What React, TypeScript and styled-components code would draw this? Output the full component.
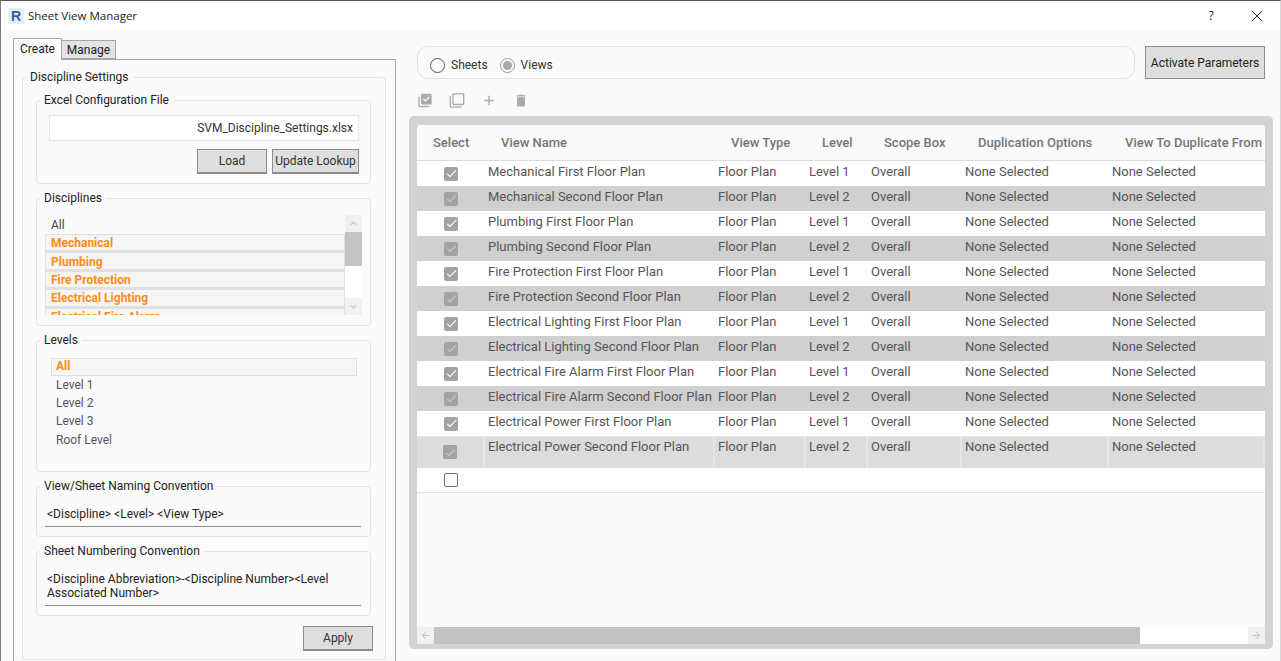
import * as React from 'react';
import styled, { createGlobalStyle } from 'styled-components';
import { X } from 'lucide-react';
import { MdLibraryAddCheck, MdOutlineFilterNone, MdAdd, MdDelete, MdCheck, MdKeyboardArrowUp, MdKeyboardArrowDown, MdArrowBack, MdArrowForward } from 'react-icons/md';

const disciplines = ['Mechanical', 'Plumbing', 'Fire Protection', 'Electrical Lighting', 'Electrical Fire Alarm'];
const levels = ['All', 'Level 1', 'Level 2', 'Level 3', 'Roof Level'];

const viewNames = [
	'Mechanical First Floor Plan',
	'Mechanical Second Floor Plan',
	'Plumbing First Floor Plan',
	'Plumbing Second Floor Plan',
	'Fire Protection First Floor Plan',
	'Fire Protection Second Floor Plan',
	'Electrical Lighting First Floor Plan',
	'Electrical Lighting Second Floor Plan',
	'Electrical Fire Alarm First Floor Plan',
	'Electrical Fire Alarm Second Floor Plan',
	'Electrical Power First Floor Plan',
];

const headers = ['Select', 'View Name', 'View Type', 'Level', 'Scope Box', 'Duplication Options', 'View To Duplicate From'];

const Cells: React.FC<{ name: string; level: string }> = ({ name, level }) => (
	<>
		<Cell>{name}</Cell>
		<Cell>Floor Plan</Cell>
		<Cell>{level}</Cell>
		<Cell>Overall</Cell>
		<Cell>None Selected</Cell>
		<Cell>None Selected</Cell>
	</>
);

const App: React.FC = () => {
	return (
		<Window>
			<GlobalStyle />
			<TitleBar>
				<AppIcon>R</AppIcon>
				<WindowTitle>Sheet View Manager</WindowTitle>
				<HelpButton>?</HelpButton>
				<CloseButton><X size={20} strokeWidth={1.2} /></CloseButton>
			</TitleBar>
			<Body>
				<LeftPane>
					<TabStrip>
						<Tab $active>Create</Tab>
						<Tab>Manage</Tab>
					</TabStrip>
					<TabPanel>
						<OuterGroup>
							<OuterLegend>Discipline Settings</OuterLegend>
							<Group $height={91}>
								<Legend>Excel Configuration File</Legend>
								<FileBox>SVM_Discipline_Settings.xlsx</FileBox>
								<FileButtons>
									<GrayButton $width={70}>Load</GrayButton>
									<GrayButton $width={87}>Update Lookup</GrayButton>
								</FileButtons>
							</Group>
							<Group $height={135}>
								<Legend>Disciplines</Legend>
								<ListFrame>
									<ListClip>
										<PlainItem>All</PlainItem>
										{disciplines.map((d) => <PickedItem key={d}>{d}</PickedItem>)}
									</ListClip>
									<VScroll>
										<ScrollArrow><MdKeyboardArrowUp size={13} /></ScrollArrow>
										<VThumb />
										<VTrack />
										<ScrollArrow><MdKeyboardArrowDown size={13} /></ScrollArrow>
									</VScroll>
								</ListFrame>
							</Group>
							<Group $height={139}>
								<Legend>Levels</Legend>
								<LevelList>
									{levels.map((l, i) => i === 0
										? <PickedLevel key={l}>{l}</PickedLevel>
										: <LevelItem key={l}>{l}</LevelItem>)}
								</LevelList>
							</Group>
							<Group $height={58}>
								<Legend>View/Sheet Naming Convention</Legend>
								<ConventionText>&lt;Discipline&gt; &lt;Level&gt; &lt;View Type&gt;</ConventionText>
							</Group>
							<Group $height={72}>
								<Legend>Sheet Numbering Convention</Legend>
								<ConventionText>&lt;Discipline Abbreviation&gt;-&lt;Discipline Number&gt;&lt;Level Associated Number&gt;</ConventionText>
							</Group>
							<ApplyRow>
								<GrayButton $width={70}>Apply</GrayButton>
							</ApplyRow>
						</OuterGroup>
					</TabPanel>
				</LeftPane>
				<RightPane>
					<TopRow>
						<RadioBar>
							<RadioOption>
								<Radio />
								<span>Sheets</span>
							</RadioOption>
							<RadioOption>
								<Radio $checked />
								<span>Views</span>
							</RadioOption>
						</RadioBar>
						<ActivateButton>Activate Parameters</ActivateButton>
					</TopRow>
					<Toolbar>
						<ToolIcon><MdLibraryAddCheck size={17} /></ToolIcon>
						<ToolIcon><MdOutlineFilterNone size={17} /></ToolIcon>
						<ToolIcon><MdAdd size={17} /></ToolIcon>
						<ToolIcon><MdDelete size={17} /></ToolIcon>
					</Toolbar>
					<GridFrame>
						<GridInner>
							<HeaderRow>
								{headers.map((h) => <HeaderCell key={h}>{h}</HeaderCell>)}
							</HeaderRow>
							{viewNames.map((name, i) => (
								<Row key={name} $alt={i % 2 === 1}>
									<CheckCell><CheckBox $dim={i % 2 === 1}><MdCheck size={13} /></CheckBox></CheckCell>
									<Cells name={name} level={i % 2 === 1 ? 'Level 2' : 'Level 1'} />
								</Row>
							))}
							<SelectedRow>
								<SelectedCell $center><CheckBox $dim><MdCheck size={13} /></CheckBox></SelectedCell>
								<SelectedCell>Electrical Power Second Floor Plan</SelectedCell>
								<SelectedCell>Floor Plan</SelectedCell>
								<SelectedCell>Level 2</SelectedCell>
								<SelectedCell>Overall</SelectedCell>
								<SelectedCell>None Selected</SelectedCell>
								<SelectedCell>None Selected</SelectedCell>
							</SelectedRow>
							<NewRow>
								<CheckCell><EmptyCheck /></CheckCell>
							</NewRow>
							<GridSpacer />
							<HScroll>
								<HArrow><MdArrowBack size={11} /></HArrow>
								<HThumb />
								<HTrack />
								<HArrow><MdArrowForward size={11} /></HArrow>
							</HScroll>
						</GridInner>
					</GridFrame>
				</RightPane>
			</Body>
		</Window>
	);
};

export default App;

const GlobalStyle = createGlobalStyle`
	html, body {
		margin: 0;
		padding: 0;
		height: 100%;
		overflow: hidden;
		background: #fafafa;
	}
	* {
		box-sizing: border-box;
	}
`;

const Window = styled.div`
	width: 1281px;
	height: 661px;
	display: flex;
	flex-direction: column;
	overflow: hidden;
	background: #fafafa;
	border-top: 1px solid #555;
	border-left: 1px solid #7a7a7a;
	border-right: 1px solid #d8d8d8;
	font-family: Roboto, "Liberation Sans", sans-serif;
	font-size: 12px;
	color: #333;
`;

const TitleBar = styled.div`
	height: 29px;
	flex: none;
	display: flex;
	align-items: center;
	padding-left: 7px;
	background: #fff;
`;

const AppIcon = styled.span`
	width: 16px;
	height: 16px;
	display: flex;
	align-items: center;
	justify-content: center;
	background: #e6eff7;
	color: #2f5f9c;
	font-family: "Liberation Sans", sans-serif;
	font-size: 14px;
	font-weight: 700;
`;

const WindowTitle = styled.span`
	margin-left: 4px;
	flex: 1;
	font-family: "Open Sans", "Liberation Sans", sans-serif;
	font-size: 11.5px;
	color: #222;
`;

const HelpButton = styled.span`
	width: 24px;
	text-align: center;
	font-family: "Open Sans", sans-serif;
	font-size: 12px;
	color: #222;
`;

const CloseButton = styled.span`
	width: 20px;
	margin: 0 13px 0 24px;
	display: flex;
	color: #222;
`;

const Body = styled.div`
	flex: 1;
	display: flex;
	min-height: 0;
`;

const LeftPane = styled.div`
	width: 395px;
	flex: none;
	padding: 8px 0 0 12px;
	display: flex;
	flex-direction: column;
`;

const TabStrip = styled.div`
	display: flex;
	align-items: flex-end;
	height: 22px;
	flex: none;
	position: relative;
	z-index: 1;
	margin-bottom: -1px;
`;

const Tab = styled.div<{ $active?: boolean }>`
	height: ${(p) => (p.$active ? '22px' : '19px')};
	width: ${(p) => (p.$active ? '49px' : '54px')};
	margin-bottom: ${(p) => (p.$active ? '0' : '1px')};
	display: flex;
	align-items: center;
	justify-content: center;
	border: 1px solid #a6a6a6;
	border-bottom: ${(p) => (p.$active ? '1px solid #fafafa' : '1px solid #a6a6a6')};
	border-left: ${(p) => (p.$active ? '1px solid #a6a6a6' : 'none')};
	background: ${(p) => (p.$active ? '#fafafa' : '#e3e3e3')};
	font-size: 12px;
	color: #222;
`;

const TabPanel = styled.div`
	flex: 1;
	border: 1px solid #a6a6a6;
	border-bottom: none;
	padding: 10px 9px 0 8px;
	min-height: 0;
`;

const OuterGroup = styled.fieldset`
	margin: 0;
	padding: 8px 14px 0 13px;
	border: 1px solid #dfe5ea;
	border-radius: 4px;
	height: 590px;
	min-width: 0;
	display: flex;
	flex-direction: column;
	gap: 0;
`;

const Legend = styled.legend`
	margin-left: -5px;
	padding: 0 4px;
	font-size: 12px;
	line-height: 15px;
	color: #222;
`;

const OuterLegend = styled(Legend)`
	margin-left: -10px;
`;

const Group = styled.fieldset<{ $height: number }>`
	margin: 0 0 7px;
	padding: 0 8px 0 8px;
	height: ${(p) => p.$height}px;
	flex: none;
	min-width: 0;
	border: 1px solid #dfe5ea;
	border-radius: 4px;
`;

const FileBox = styled.div`
	margin: 7px 3px 0 4px;
	height: 26px;
	display: flex;
	align-items: center;
	justify-content: flex-end;
	padding-right: 5px;
	background: #fff;
	border: 1px solid #e6e6e6;
	color: #333;
`;

const FileButtons = styled.div`
	margin: 8px 3px 0 0;
	display: flex;
	justify-content: flex-end;
	gap: 5px;
`;

const GrayButton = styled.div<{ $width: number }>`
	width: ${(p) => p.$width}px;
	height: 25px;
	display: flex;
	align-items: center;
	justify-content: center;
	background: #dedede;
	border: 1px solid #8c8c8c;
	border-bottom-width: 2px;
	font-size: 12px;
	color: #333;
	white-space: nowrap;
`;

const ListFrame = styled.div`
	display: flex;
	height: 100px;
	margin-top: 9px;
`;

const ListClip = styled.div`
	flex: 1;
	overflow: hidden;
	min-width: 0;
`;

const PlainItem = styled.div`
	height: 18px;
	margin-top: 1px;
	padding-left: 6px;
	padding-top: 1px;
	padding-bottom: 1px;
	display: flex;
	align-items: center;
	color: #444;
`;

const PickedItem = styled.div`
	height: 18.4px;
	padding-left: 5px;
	padding-top: 1px;
	display: flex;
	align-items: center;
	background: #f5f5f5;
	border: 1px solid #e0e0e0;
	border-bottom-width: 2px;
	color: #ff8c1a;
	font-weight: 700;
`;

const VScroll = styled.div`
	width: 17px;
	flex: none;
	display: flex;
	flex-direction: column;
`;

const ScrollArrow = styled.div`
	height: 17px;
	flex: none;
	display: flex;
	align-items: center;
	justify-content: center;
	background: #f0f0f0;
	color: #c4c4c4;
`;

const VThumb = styled.div`
	height: 34px;
	flex: none;
	background: #c4c4c4;
`;

const VTrack = styled.div`
	flex: 1;
	background: #fff;
`;

const LevelList = styled.div`
	margin: 10px 5px 0 6px;
`;

const LevelItem = styled.div`
	height: 18.4px;
	padding-left: 5px;
	padding-bottom: 2px;
	display: flex;
	align-items: center;
	color: #555;
`;

const PickedLevel = styled(LevelItem)`
	padding-left: 4px;
	background: #f5f5f5;
	border: 1px solid #e0e0e0;
	color: #ff8c1a;
	font-weight: 700;
`;

const ConventionText = styled.div`
	padding: 13px 2px 5px 2px;
	width: 316px;
	border-bottom: 1px solid #8f8f8f;
	line-height: 14px;
	color: #222;
`;

const ApplyRow = styled.div`
	display: flex;
	justify-content: flex-end;
	margin: 3px -2px 0 0;
`;

const RightPane = styled.div`
	flex: 1;
	min-width: 0;
	padding: 16px 7px 0 13px;
	display: flex;
	flex-direction: column;
`;

const TopRow = styled.div`
	display: flex;
	gap: 10px;
	padding: 0 8px;
	height: 33px;
	flex: none;
`;

const RadioBar = styled.div`
	flex: 1;
	display: flex;
	align-items: center;
	gap: 12px;
	padding-left: 12px;
	padding-top: 5px;
	border: 1px solid #e2e2e2;
	border-radius: 11px;
`;

const RadioOption = styled.div`
	display: flex;
	align-items: center;
	gap: 6px;
	font-size: 12px;
	color: #333;
`;

const Radio = styled.span<{ $checked?: boolean }>`
	width: 15px;
	height: 15px;
	border-radius: 50%;
	border: 1px solid ${(p) => (p.$checked ? '#9a9a9a' : '#555')};
	display: flex;
	align-items: center;
	justify-content: center;

	&::after {
		content: '';
		display: ${(p) => (p.$checked ? 'block' : 'none')};
		width: 9px;
		height: 9px;
		border-radius: 50%;
		background: #a8a8a8;
	}
`;

const ActivateButton = styled.div`
	width: 120px;
	flex: none;
	display: flex;
	align-items: center;
	justify-content: center;
	background: #dedede;
	border: 1px solid #8c8c8c;
	font-size: 12px;
	color: #222;
	white-space: nowrap;
`;

const Toolbar = styled.div`
	height: 37px;
	flex: none;
	padding: 6px 0 0 8px;
	display: flex;
	align-items: center;
	gap: 16px;
`;

const ToolIcon = styled.span`
	width: 16px;
	display: flex;
	justify-content: center;
	color: #ababab;
`;

const GridFrame = styled.div`
	height: 533px;
	flex: none;
	padding: 9px 8px 5px;
	background: #d3d3d3;
	border-radius: 5px;
`;

const GridInner = styled.div`
	height: 100%;
	display: flex;
	flex-direction: column;
	background: #fafafa;
	border-radius: 3px 3px 0 0;
	overflow: hidden;
`;

const columns = '68px 230px 91px 62px 94px 147px 1fr';

const HeaderRow = styled.div`
	height: 36px;
	flex: none;
	display: grid;
	grid-template-columns: ${columns};
	align-items: center;
	border-bottom: 1px solid #dcdcdc;
`;

const HeaderCell = styled.div`
	padding-left: 16px;
	font-size: 13px;
	font-weight: 500;
	color: #757575;
	white-space: nowrap;
`;

const Row = styled.div<{ $alt?: boolean }>`
	height: 25px;
	flex: none;
	display: grid;
	grid-template-columns: ${columns};
	align-items: center;
	background: ${(p) => (p.$alt ? '#d0d0d0' : '#fff')};
`;

const Cell = styled.div`
	padding-left: 3px;
	padding-bottom: 4px;
	font-size: 13px;
	color: #555;
	white-space: nowrap;
`;

const CheckCell = styled.div`
	display: flex;
	justify-content: center;
`;

const CheckBox = styled.span<{ $dim?: boolean }>`
	width: 14px;
	height: 14px;
	display: flex;
	align-items: center;
	justify-content: center;
	border-radius: 2px;
	background: #a3a3a3;
	color: ${(p) => (p.$dim ? '#c8c8c8' : '#fff')};
`;

const EmptyCheck = styled.span`
	width: 14px;
	height: 14px;
	border: 1px solid #6e6e6e;
	border-radius: 2px;
	background: #fff;
`;

const SelectedRow = styled.div`
	height: 32px;
	flex: none;
	display: grid;
	grid-template-columns: ${columns};
	gap: 0;
	background: #e6e6e6;
	border-top: 1px solid #e6e6e6;
	border-bottom: 1px solid #e0e0e0;
`;

const SelectedCell = styled.div<{ $center?: boolean }>`
	margin-right: 2px;
	background: #dcdcdc;
	padding-left: 3px;
	padding-top: 2px;
	font-size: 13px;
	color: #555;
	white-space: nowrap;
	display: flex;
	${(p) => (p.$center ? 'justify-content: center; align-items: center; padding: 0;' : '')}
`;

const NewRow = styled.div`
	height: 25px;
	flex: none;
	display: flex;
	align-items: center;
	border-bottom: 1px solid #e3e3e3;
	background: #fff;

	& > div {
		width: 68px;
	}
`;

const GridSpacer = styled.div`
	flex: 1;
`;

const HScroll = styled.div`
	height: 17px;
	flex: none;
	display: flex;
	background: #fff;
`;

const HArrow = styled.div`
	width: 17px;
	flex: none;
	display: flex;
	align-items: center;
	justify-content: center;
	background: #f0f0f0;
	color: #c4c4c4;
`;

const HThumb = styled.div`
	width: 706px;
	flex: none;
	background: #c2c2c2;
`;

const HTrack = styled.div`
	flex: 1;
`;
